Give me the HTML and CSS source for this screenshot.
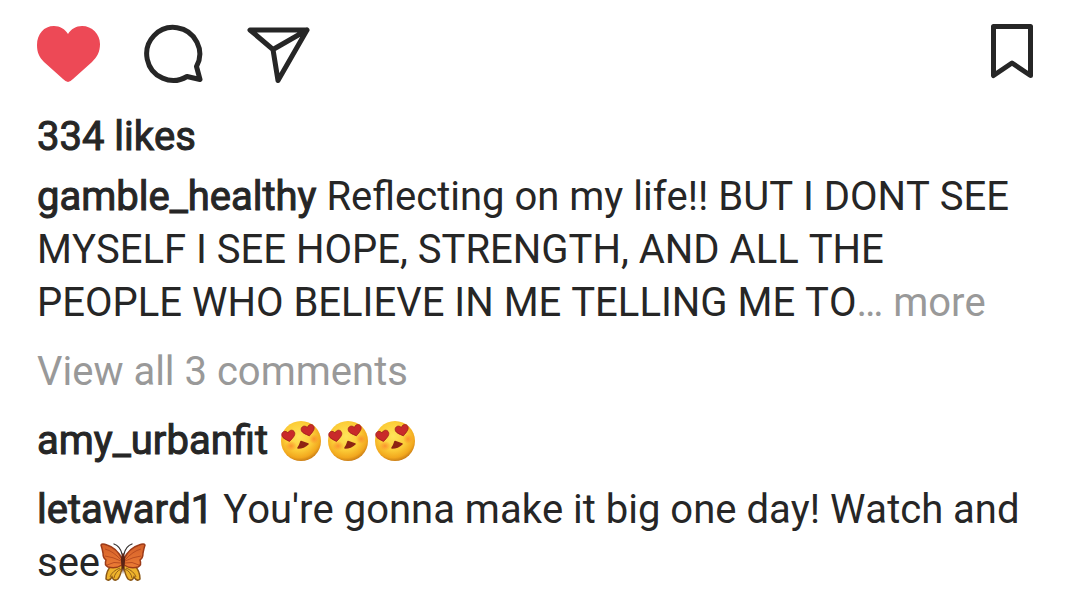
FILE: index.html
```html
<!DOCTYPE html>
<html lang="en">
<head>
<meta charset="utf-8">
<meta name="viewport" content="width=device-width, initial-scale=1">
<title>Post</title>
<link rel="stylesheet" href="styles.css">
</head>
<body>
<svg class="defs" aria-hidden="true">
  <defs>
    <radialGradient id="face" cx="45%" cy="38%" r="63%">
      <stop offset="0" stop-color="#ffe45a"/><stop offset=".55" stop-color="#fccd38"/><stop offset=".85" stop-color="#f2a81e"/><stop offset="1" stop-color="#c87c16"/>
    </radialGradient>
    <radialGradient id="blush"><stop offset="0" stop-color="#fb8a2c" stop-opacity=".85"/><stop offset="1" stop-color="#fb8a2c" stop-opacity="0"/></radialGradient>
    <linearGradient id="wing" x1="0" y1="0" x2="0" y2="1"><stop offset="0" stop-color="#d4602a"/><stop offset="1" stop-color="#ec7c35"/></linearGradient>
    <path id="eye" d="M0 6C-4 3-7 1-6.500-2C-6-5-2-6 0-2.500C2-6 6-5 6.500-2C7 1 4 3 0 6Z"/>
    <symbol id="love" viewBox="0 0 42 42">
      <circle cx="21" cy="21" r="20" fill="url(#face)"/>
      <ellipse cx="11" cy="26" rx="6" ry="5" fill="url(#blush)"/>
      <ellipse cx="34" cy="19" rx="5" ry="5" fill="url(#blush)"/>
      <use href="#eye" transform="translate(8.500 15.500) rotate(-10)" fill="#c92a2a" stroke="#9e1c1c" stroke-width=".8"/>
      <use href="#eye" transform="translate(28 10) rotate(-14)" fill="#c92a2a" stroke="#9e1c1c" stroke-width=".8"/>
      <path d="M21 21.500L28 24Q24 28 18 28Q20 25 21 21.500Z" fill="#8e2413" stroke="#8e2413" stroke-width="1.500" stroke-linejoin="round"/>
    </symbol>
  </defs>
</svg>
<main class="post">
  <div class="actions">
    <button class="action" aria-label="Unlike"><svg width="64" height="64" viewBox="0 0 64 64"><path d="M31 60Q29 60 26 57L7 40C2 35 0 30 0 23C0 12 7 4 17 4C23 4 28 7 31 12C34 7 39 4 45 4C55 4 63 12 63 22C63 30 60 35 55 40L36 57Q33 60 31 60Z" fill="#ed4956"/></svg></button>
    <button class="action" aria-label="Comment"><svg width="64" height="64" viewBox="0 0 64 64"><path d="M45 54.500A26.500 26.500 0 1 1 54.500 44.500L58 57.500Z" class="stroke"/></svg></button>
    <button class="action" aria-label="Share"><svg width="64" height="64" viewBox="0 0 64 64"><path d="M3 8H60L31 58.500L26 27.500ZM26 27.500L60 8" class="stroke"/></svg></button>
    <button class="action save" aria-label="Save"><svg width="44" height="64" viewBox="0 0 44 64"><path d="M3.500 4.500H40.500V53.500L22 41L3.500 53.500Z" class="stroke"/></svg></button>
  </div>
  <p class="likes strong">334 likes</p>
  <p class="caption"><a class="strong" href="#profile">gamble_healthy</a> Reflecting on my life!! BUT I DONT SEE MYSELF I SEE HOPE, STRENGTH, AND ALL THE PEOPLE WHO BELIEVE IN ME TELLING ME TO<button class="more">… more</button></p>
  <a class="view-all" href="#comments">View all 3 comments</a>
  <p class="comment"><a class="strong" href="#amy">amy_urbanfit</a> <span class="emojis" role="img" aria-label="Three heart-eyed faces"><svg class="face"><use href="#love"/></svg><svg class="face"><use href="#love"/></svg><svg class="face"><use href="#love"/></svg></span></p>
  <p class="comment"><a class="strong" href="#leta">letaward1</a> You're gonna make it big one day! Watch and see<svg class="butterfly" viewBox="0 0 46 42" role="img" aria-label="Butterfly">
    <g id="half">
      <path d="M22 23L11 24Q6 29 6 37Q9 40 12 35Q14 40 18 37Q21 33 22 25Z" fill="#eeb32c" stroke="#8a5716" stroke-width="1.500"/>
      <path d="M10 35Q12 29 20 26M14 36Q15 30 21 27" fill="none" stroke="#946019" stroke-width="1"/>
      <path d="M22 17Q17 6 7 3Q2 1 1 3Q2 6 3 11Q3 16 6 18Q4 23 8 25Q16 27 22 23Z" fill="url(#wing)" stroke="#9c3b19" stroke-width="1.500"/>
      <path d="M21 18Q13 9 5 7M21 19Q13 15 5 14M21 21Q14 19 7 23" fill="none" stroke="#b94c20" stroke-width="1"/>
      <path d="M22 12Q20 4 14 2" fill="none" stroke="#35302e" stroke-width="1.300" stroke-linecap="round"/>
    </g>
    <use href="#half" transform="matrix(-1 0 0 1 46 0)"/>
    <path d="M23 11Q26 13 24.500 23L23 32L21.500 23Q20 13 23 11Z" fill="#5a2415"/>
  </svg></p>
</main>
</body>
</html>
```
FILE: styles.css
```css
* { box-sizing: border-box; }
body {
  margin: 0;
  background: #fff;
  color: #262626;
  font: 40px/53px Roboto, "Liberation Sans", sans-serif;
  font-kerning: none;
}
p { margin: 0; }
a { color: inherit; text-decoration: none; }
button {
  padding: 0;
  border: 0;
  background: none;
  color: inherit;
  font: inherit;
  font-kerning: inherit;
  cursor: pointer;
}
.defs { position: absolute; width: 0; height: 0; }
.post {
  display: flex;
  flex-direction: column;
  gap: 16px;
  padding: 22px 46px 0 37px;
}
.actions { display: flex; gap: 41px; margin-bottom: 8px; }
.action, .action svg { display: block; }
.save { margin-left: auto; }
.stroke {
  fill: none;
  stroke: #262626;
  stroke-width: 5;
  stroke-linejoin: round;
  stroke-linecap: round;
}
.strong { -webkit-text-stroke: 1px #262626; }
.likes { margin-bottom: -9px; }
.more, .view-all { color: #999; }
.emojis { margin-left: 2px; }
.face { width: 42px; height: 42px; margin-right: 5px; vertical-align: -8px; }
.butterfly { width: 46px; height: 42px; vertical-align: -8px; }
```
